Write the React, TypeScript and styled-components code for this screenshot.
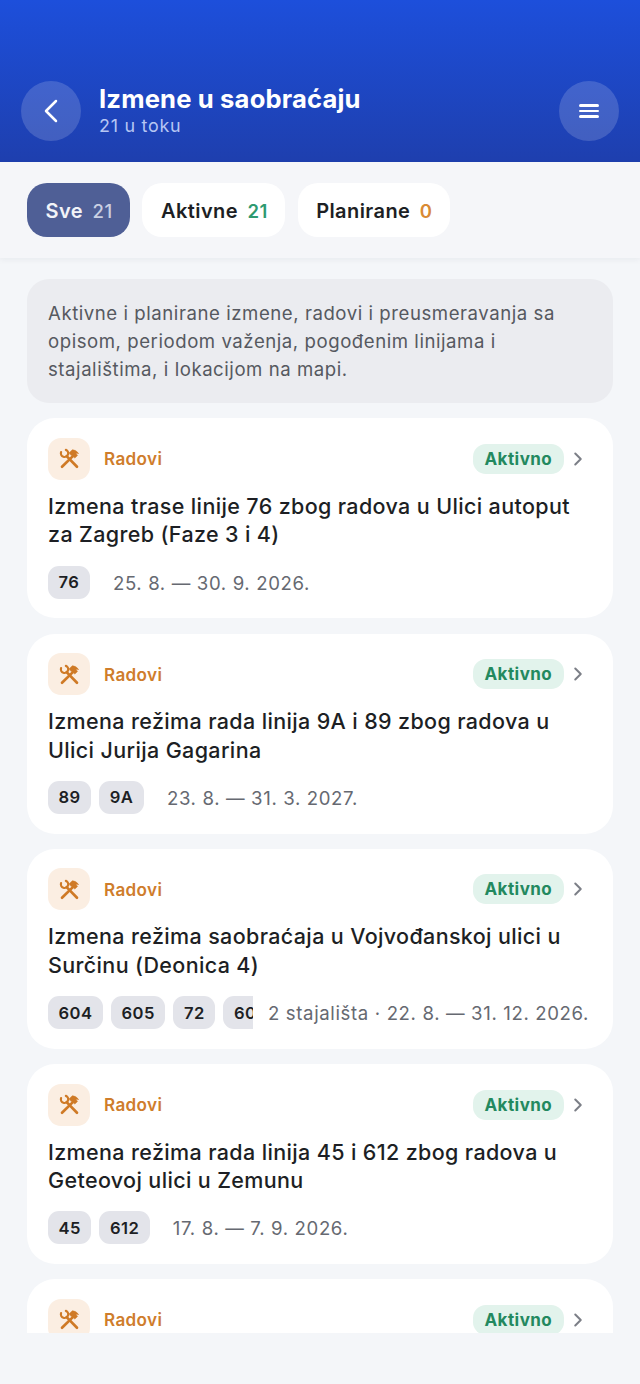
import styled, { createGlobalStyle } from 'styled-components';
import { ChevronLeft, ChevronRight } from 'lucide-react';

const GlobalStyle = createGlobalStyle`
	html, body {
		margin: 0;
		padding: 0;
		background: #f4f6f9;
		font-family: Inter, "Noto Sans", sans-serif;
	}
	* {
		box-sizing: border-box;
	}
`;

const Page = styled.div`
	width: 640px;
	height: 1384px;
	display: flex;
	flex-direction: column;
	overflow: hidden;
	background: #f4f6f9;
`;

const Header = styled.header`
	height: 162px;
	flex: none;
	display: flex;
	align-items: flex-end;
	justify-content: space-between;
	padding: 0 21px 21px;
	background: linear-gradient(180deg, #1d4fdb 0%, #1e3fae 100%);
`;

const HeaderLeft = styled.div`
	display: flex;
	align-items: center;
	gap: 18px;
`;

const RoundButton = styled.div`
	width: 60px;
	height: 60px;
	border-radius: 50%;
	display: flex;
	align-items: center;
	justify-content: center;
	background: rgba(255, 255, 255, 0.16);
	color: #fff;
`;

const MenuIcon = styled.div`
	width: 20px;
	display: flex;
	flex-direction: column;
	gap: 3.2px;
	span {
		height: 2.6px;
		border-radius: 2px;
		background: #fff;
	}
`;

const TitleBlock = styled.div`
	display: flex;
	flex-direction: column;
	margin-top: -2px;
`;

const Title = styled.div`
	font-size: 25.6px;
	line-height: 31px;
	font-weight: 700;
	color: #fff;
	letter-spacing: 0.16px;
`;

const Subtitle = styled.div`
	margin-top: 1px;
	font-size: 17.9px;
	line-height: 22px;
	letter-spacing: 0.75px;
	color: #b6c6f3;
`;

const FilterBar = styled.div`
	height: 96px;
	flex: none;
	display: flex;
	align-items: center;
	gap: 12.5px;
	padding: 0 27px;
	background: #f5f6f9;
	box-shadow: 0 2px 6px rgba(20, 30, 60, 0.05);
	position: relative;
	z-index: 1;
`;

const Pill = styled.div<{ $active?: boolean }>`
	height: 54px;
	display: flex;
	align-items: center;
	gap: 9.5px;
	padding: 1px 17.4px 0 18.6px;
	border-radius: 20px;
	font-size: 20px;
	font-weight: 600;
	letter-spacing: 0.42px;
	background: ${(props) => (props.$active ? '#4f5f96' : '#fff')};
	color: ${(props) => (props.$active ? '#f2f3f8' : '#1d1f24')};
`;

const PillCount = styled.span<{ $color: string }>`
	color: ${(props) => props.$color};
	font-size: 18.5px;
	font-weight: ${(props) => (props.$color === '#c9cfe3' ? 500 : 600)};
`;

const Scroll = styled.div`
	height: 1075px;
	flex: none;
	overflow: hidden;
	display: flex;
	flex-direction: column;
	gap: 15.25px;
	padding: 21px 27px 0;
`;

const Notice = styled.div`
	flex: none;
	height: 124px;
	padding: 20px 21px;
	border-radius: 22px;
	background: #ebecf0;
	color: #565960;
	font-size: 18.6px;
	line-height: 28.2px;
	letter-spacing: 0.55px;
`;

const Card = styled.div`
	flex: none;
	height: 200px;
	padding: 19.5px 21px;
	border-radius: 28px;
	background: #fff;
`;

const CardTop = styled.div`
	display: flex;
	align-items: center;
	justify-content: space-between;
`;

const TypeGroup = styled.div`
	display: flex;
	align-items: center;
	gap: 14px;
`;

const TypeIcon = styled.div`
	width: 42px;
	height: 42px;
	border-radius: 13px;
	display: flex;
	align-items: center;
	justify-content: center;
	background: #fbeee2;
	color: #cf7a26;
`;

const TypeLabel = styled.span`
	color: #cf7d2c;
	font-size: 17.1px;
	font-weight: 600;
	letter-spacing: 0.35px;
`;

const StatusGroup = styled.div`
	display: flex;
	align-items: center;
	gap: 3px;
	margin-right: 3px;
	color: #7c7f87;
`;

const Status = styled.span`
	height: 30px;
	padding: 0 11.8px;
	display: flex;
	align-items: center;
	border-radius: 13px;
	background: #e2f3ec;
	color: #23895f;
	font-size: 17px;
	font-weight: 700;
	letter-spacing: 0.45px;
`;

const CardTitle = styled.div`
	margin-top: 12px;
	color: #1d1f24;
	font-size: 21.5px;
	line-height: 28.6px;
	font-weight: 500;
	letter-spacing: 0.36px;
`;

const CardMeta = styled.div`
	margin-top: 16.8px;
	display: flex;
	align-items: center;
	gap: 15px;
`;

const Chips = styled.div<{ $clip?: boolean }>`
	display: flex;
	flex: none;
	overflow: hidden;
	width: ${(props) => (props.$clip ? '205px' : 'auto')};
`;

const Chip = styled.span`
	flex: none;
	height: 33px;
	margin-right: 8px;
	padding: 0 10.6px;
	display: flex;
	align-items: center;
	border-radius: 11px;
	background: #e3e4ea;
	color: #1d1f24;
	font-size: 16.6px;
	font-weight: 600;
	letter-spacing: 0.4px;
`;

const Period = styled.span`
	padding-top: 1px;
	color: #666971;
	font-size: 18.6px;
	letter-spacing: 0.63px;
	white-space: nowrap;
`;

const ToolsIcon = () => (
	<svg width="23" height="23" viewBox="0 0 24 24" fill="none" stroke="currentColor" strokeLinecap="round">
		<path d="M9 9.5 19.8 20.6" strokeWidth="2.8" />
		<path d="M3.2 5.4A3.8 3.8 0 1 0 8.2 3" strokeWidth="2.3" />
		<path d="M4.2 20.6 15 10" strokeWidth="2.8" />
		<path
			d="M11.4 6.2 15 2.8Q19 3 21.6 6.8L18.6 6.4 20.4 8.8 17.6 11.6 15 9.4 13.4 8.4Z"
			fill="currentColor"
			strokeWidth="0.5"
			strokeLinejoin="round"
		/>
	</svg>
);

type Item = {
	title: [string, string];
	chips: string[];
	period: string;
	clip?: boolean;
};

const items: Item[] = [
	{
		title: ['Izmena trase linije 76 zbog radova u Ulici autoput', 'za Zagreb (Faze 3 i 4)'],
		chips: ['76'],
		period: '25. 8. — 30. 9. 2026.',
	},
	{
		title: ['Izmena režima rada linija 9A i 89 zbog radova u', 'Ulici Jurija Gagarina'],
		chips: ['89', '9A'],
		period: '23. 8. — 31. 3. 2027.',
	},
	{
		title: ['Izmena režima saobraćaja u Vojvođanskoj ulici u', 'Surčinu (Deonica 4)'],
		chips: ['604', '605', '72', '60'],
		period: '2 stajališta · 22. 8. — 31. 12. 2026.',
		clip: true,
	},
	{
		title: ['Izmena režima rada linija 45 i 612 zbog radova u', 'Geteovoj ulici u Zemunu'],
		chips: ['45', '612'],
		period: '17. 8. — 7. 9. 2026.',
	},
];

const CardHead = () => (
	<CardTop>
		<TypeGroup>
			<TypeIcon>
				<ToolsIcon />
			</TypeIcon>
			<TypeLabel>Radovi</TypeLabel>
		</TypeGroup>
		<StatusGroup>
			<Status>Aktivno</Status>
			<ChevronRight size={22} strokeWidth={2.2} />
		</StatusGroup>
	</CardTop>
);

const App = () => {
	return (
		<Page>
			<GlobalStyle />
			<Header>
				<HeaderLeft>
					<RoundButton>
						<ChevronLeft size={40} strokeWidth={1.5} />
					</RoundButton>
					<TitleBlock>
						<Title>Izmene u saobraćaju</Title>
						<Subtitle>21 u toku</Subtitle>
					</TitleBlock>
				</HeaderLeft>
				<RoundButton>
					<MenuIcon>
						<span />
						<span />
						<span />
					</MenuIcon>
				</RoundButton>
			</Header>
			<FilterBar>
				<Pill $active>
					Sve <PillCount $color="#c9cfe3">21</PillCount>
				</Pill>
				<Pill>
					Aktivne <PillCount $color="#2f9a70">21</PillCount>
				</Pill>
				<Pill>
					Planirane <PillCount $color="#d98a35">0</PillCount>
				</Pill>
			</FilterBar>
			<Scroll>
				<Notice>
					Aktivne i planirane izmene, radovi i preusmeravanja sa opisom, periodom važenja, pogođenim linijama i
					stajalištima, i lokacijom na mapi.
				</Notice>
				{items.map((item) => (
					<Card key={item.title[0]}>
						<CardHead />
						<CardTitle>
							{item.title[0]}
							<br />
							{item.title[1]}
						</CardTitle>
						<CardMeta>
							<Chips $clip={item.clip}>
								{item.chips.map((chip) => (
									<Chip key={chip}>{chip}</Chip>
								))}
							</Chips>
							<Period>{item.period}</Period>
						</CardMeta>
					</Card>
				))}
				<Card>
					<CardHead />
				</Card>
			</Scroll>
		</Page>
	);
};

export default App;
